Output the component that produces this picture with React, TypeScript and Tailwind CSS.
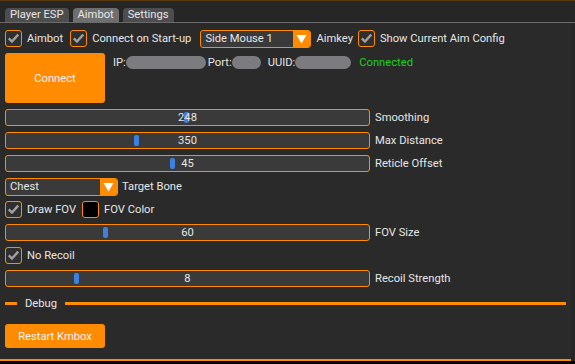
import React from "react";

function Check({ on = true }: { on?: boolean }) {
  return (
    <span className="flex h-[17px] w-[17px] items-center justify-center rounded-[3px] border border-[#ff8c00] bg-[#2f2f2f]">
      {on && (
        <svg width="13" height="13" viewBox="0 0 13 13">
          <path d="M1.8 6.3 L5 9.6 L11.2 2.6" fill="none" stroke="#a0a0a0" strokeWidth="2.4" />
        </svg>
      )}
    </span>
  );
}

function CheckLabel({ label }: { label: string }) {
  return (
    <div className="flex items-center gap-[5px]">
      <Check />
      <span>{label}</span>
    </div>
  );
}

function Combo({ value, w }: { value: string; w: string }) {
  return (
    <div className={`flex h-[18px] items-stretch overflow-hidden rounded-[3px] border border-[#ff8c00] bg-[#3a3a3a] ${w}`}>
      <span className="flex-1 pl-[4px] leading-[16px]">{value}</span>
      <span className="flex w-[17px] items-center justify-center bg-[#ff8c00]">
        <svg width="11" height="10" viewBox="0 0 11 10">
          <path d="M0.5 1 L10.5 1 L5.5 9.5 Z" fill="#fff" />
        </svg>
      </span>
    </div>
  );
}

function Slider({ value, grab, label }: { value: string; grab: number; label: string }) {
  return (
    <div className="flex h-[17px] items-center gap-[5px]">
      <div className="relative flex h-[17px] w-[365px] items-center justify-center rounded-[3px] border border-[#ff8c00] bg-[#3a3a3a]">
        <span
          className="absolute top-[2px] h-[11px] w-[5px] rounded-[2px] bg-[#3d80e0]"
          style={{ left: grab - 6 }}
        />
        <span className="relative leading-[15px]">{value}</span>
      </div>
      <span>{label}</span>
    </div>
  );
}

function Blur({ w }: { w: string }) {
  return <span className={`inline-block h-[13px] rounded-full bg-[#7c7c80] ${w}`} />;
}

export default function App() {
  return (
    <div className="h-[364px] w-[575px] bg-black font-['Roboto',sans-serif] text-[11.2px] leading-[17px] text-[#e6e6e6]">
      <div className="flex h-[361px] flex-col border-t border-[#5a3a10] bg-[#262626]">
        <div className="flex h-[22px] items-end gap-[4px] border-b border-[#6a6a6a] px-[5px] pt-[6px]">
          <span className="rounded-t-[4px] bg-[#4d4d4d] px-[5px] leading-[14px]">Player ESP</span>
          <span className="rounded-t-[4px] bg-[#6e6e6e] px-[5px] leading-[14px]">Aimbot</span>
          <span className="rounded-t-[4px] bg-[#4d4d4d] px-[5px] leading-[14px]">Settings</span>
        </div>
        <div className="mr-[4px] flex flex-1 flex-col gap-[6px] border-b-2 border-[#ff8c00] bg-[#2a2a2a] px-[5px] pt-[7px]">
          <div className="flex h-[17px] items-center">
            <CheckLabel label="Aimbot" />
            <div className="ml-[7px]">
              <CheckLabel label="Connect on Start-up" />
            </div>
            <div className="ml-[9px]">
              <Combo value="Side Mouse 1" w="w-[111px]" />
            </div>
            <span className="ml-[5px]">Aimkey</span>
            <div className="ml-[5px]">
              <CheckLabel label="Show Current Aim Config" />
            </div>
          </div>
          <div className="flex items-start">
            <button className="h-[50px] w-[100px] rounded-[3px] bg-[#ff8c00] text-[#f3f3f3]">Connect</button>
            <div className="ml-[8px] mt-[1px] flex items-center">
              <span>IP:</span>
              <Blur w="w-[80px]" />
              <span className="ml-[2px]">Port:</span>
              <Blur w="w-[29px]" />
              <span className="ml-[7px]">UUID:</span>
              <Blur w="w-[56px]" />
              <span className="ml-[8px] text-[#1ed01e]">Connected</span>
            </div>
          </div>
          <Slider value="248" grab={184} label="Smoothing" />
          <Slider value="350" grab={134} label="Max Distance" />
          <Slider value="45" grab={170} label="Reticle Offset" />
          <div className="flex h-[17px] items-center gap-[4px]">
            <Combo value="Chest" w="w-[113px]" />
            <span>Target Bone</span>
          </div>
          <div className="flex h-[17px] items-center">
            <CheckLabel label="Draw FOV" />
            <span className="ml-[6px] h-[17px] w-[17px] rounded-[3px] border border-[#ff8c00] bg-black" />
            <span className="ml-[5px]">FOV Color</span>
          </div>
          <Slider value="60" grab={103} label="FOV Size" />
          <div className="flex h-[17px] items-center">
            <CheckLabel label="No Recoil" />
          </div>
          <Slider value="8" grab={74} label="Recoil Strength" />
          <div className="mt-[2px] flex h-[17px] items-center">
            <span className="h-[3px] w-[12px] bg-[#ff8c00]" />
            <span className="mx-[8px]">Debug</span>
            <span className="h-[3px] flex-1 bg-[#ff8c00]" />
          </div>
          <button className="mt-[6px] h-[24px] w-[100px] rounded-[3px] bg-[#ff8c00] text-[#f3f3f3]">Restart Kmbox</button>
        </div>
      </div>
    </div>
  );
}
